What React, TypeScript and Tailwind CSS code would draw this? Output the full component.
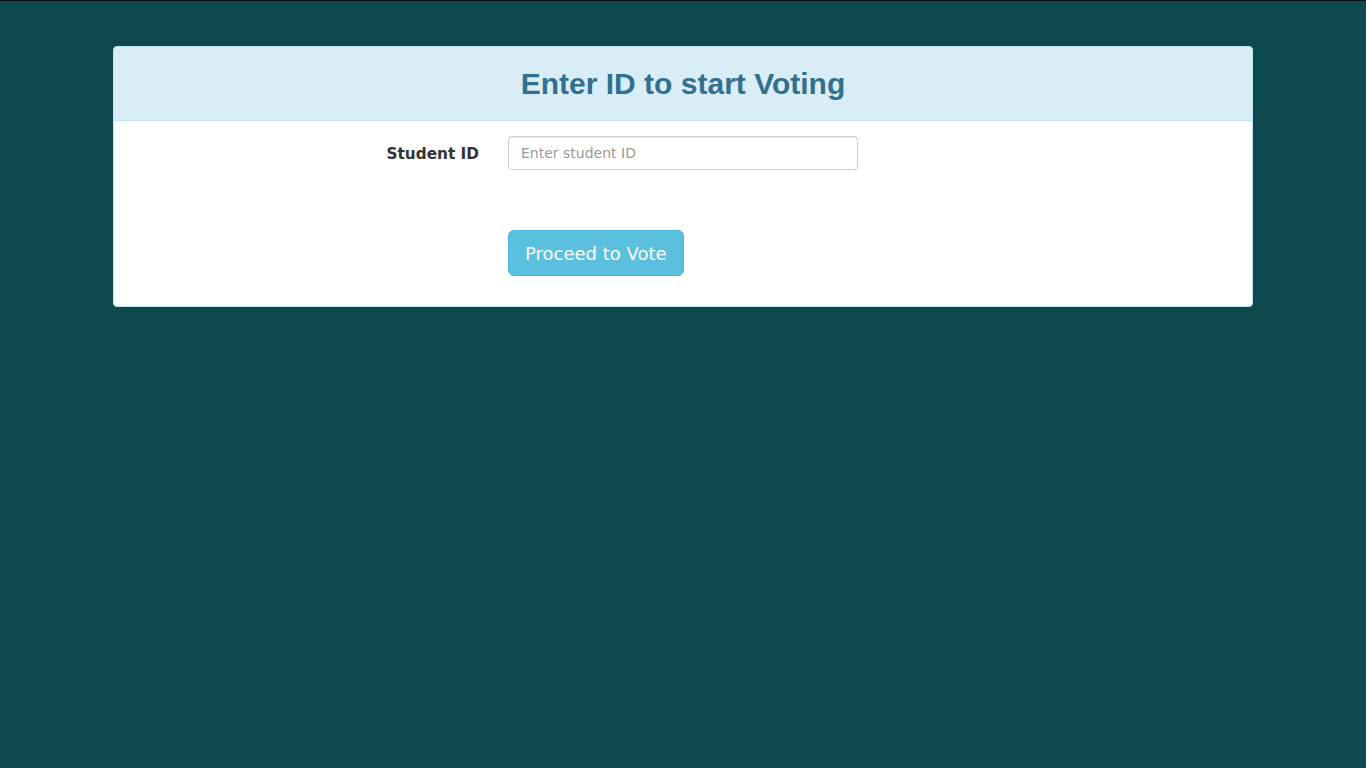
export default function App() {
  return (
    <div className="min-h-screen border-t border-[#111] bg-[#0d484c] pt-[45px] font-['DejaVu_Sans',sans-serif]">
      <div className="mx-auto w-[1140px]">
        <div className="rounded-[4px] border border-[#bce8f1] bg-white">
          <div className="flex h-[74px] items-center justify-center rounded-t-[3px] border-b border-[#bce8f1] bg-[#d9edf7]">
            <h2 className="font-['Liberation_Sans',Arial,sans-serif] text-[30px] font-bold text-[#31708f]">
              Enter ID to start Voting
            </h2>
          </div>
          <div className="px-0 pt-[15px] pb-[30px]">
            <div className="flex h-[34px] items-center">
              <label className="w-[365px] pt-[2px] text-right text-[15.3px] font-bold text-[#333]">
                Student ID
              </label>
              <input
                type="text"
                placeholder="Enter student ID"
                className="ml-[29px] h-[34px] w-[350px] rounded-[4px] border border-[#ccc] px-3 text-[14px] text-[#555] shadow-[inset_0_1px_1px_rgba(0,0,0,0.075)] outline-none placeholder:text-[#999]"
              />
            </div>
            <div className="mt-[60px] pl-[394px]">
              <button className="h-[46px] rounded-[6px] border border-[#46b8da] bg-[#5bc0de] px-4 text-[18px] text-white">
                Proceed to Vote
              </button>
            </div>
          </div>
        </div>
      </div>
    </div>
  );
}
